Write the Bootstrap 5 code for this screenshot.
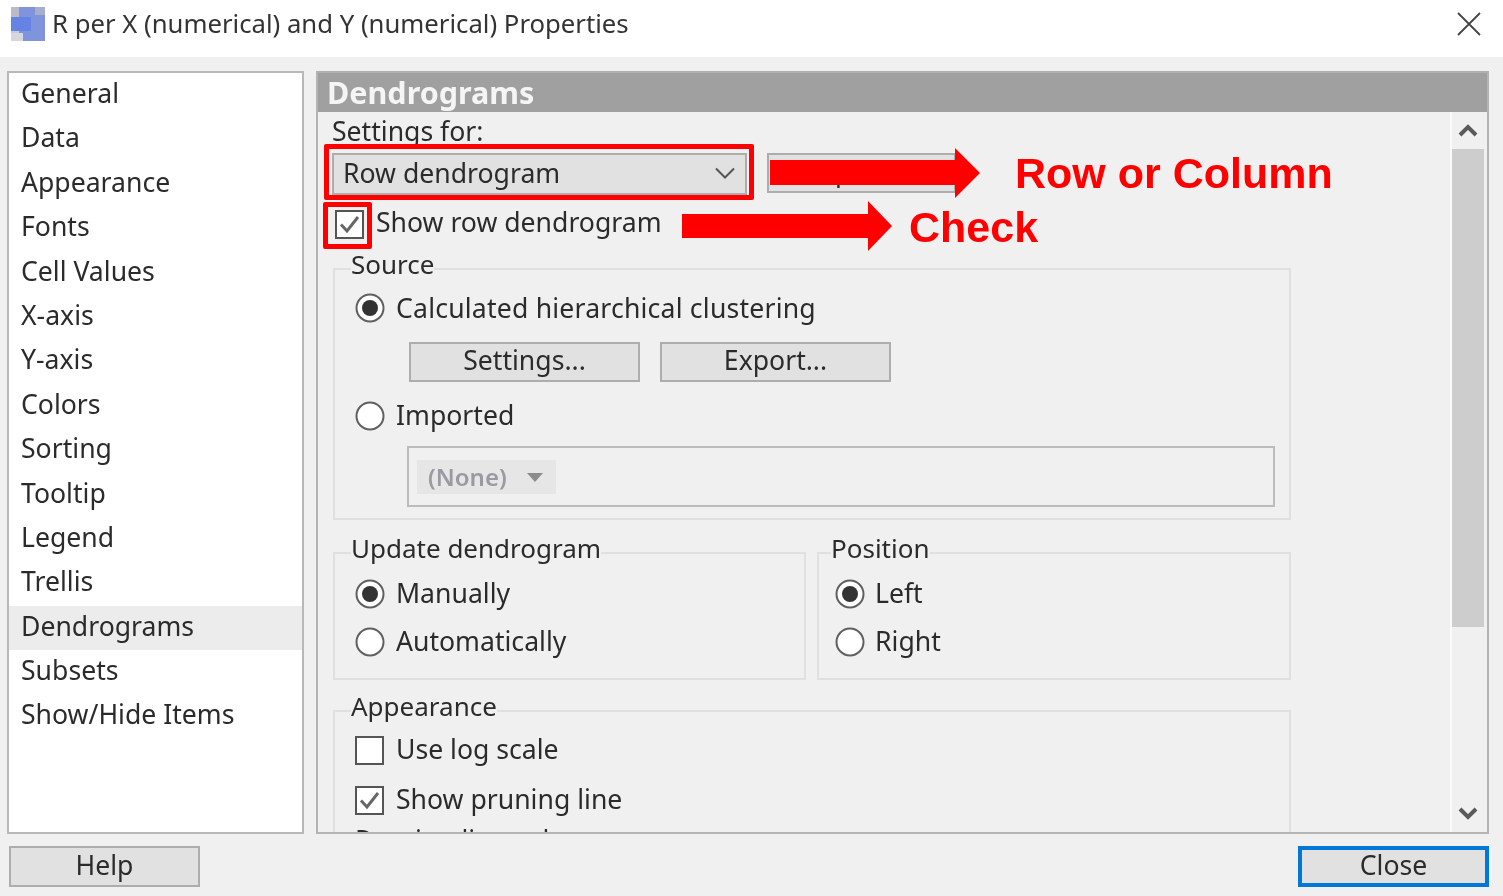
<!DOCTYPE html>
<html lang="en">
<head>
<meta charset="utf-8">
<title>R per X (numerical) and Y (numerical) Properties</title>
<link href="https://cdn.jsdelivr.net/npm/bootstrap@5.3.0/dist/css/bootstrap.min.css" rel="stylesheet">
<style>
html,body{margin:0;height:100%;overflow:hidden;background:#f0f0f0}
.dlg{position:relative;width:1503px;height:896px;background:#f0f0f0;font-family:"Noto Sans","Open Sans",sans-serif;font-size:26.6px;line-height:34px;color:#2b2b2b;overflow:hidden;filter:blur(.55px)}
.dlg-title{height:57px;background:#fff;padding:0 22px 9px 11px}
.dlg-title-text{font-size:25.7px;margin-left:7px;color:#333}
.dlg-main{height:763px;margin:14px 14px 0 7px;gap:12px}
.nav-pane{width:297px;flex:none;border:2px solid #b8b8b8;background:#fff;border-radius:0;padding:0}
.nav-pane .list-group-item{height:44.4px;padding:2px 12px;border:0;background:transparent;color:#2b2b2b;line-height:36px;font-size:26.6px}
.nav-pane .list-group-item.sel{background:#ececec}
.form-pane{flex:1;min-width:0;border:2px solid #b4b4b4;border-top-color:#b0b0b0}
.pane-head{height:39px;flex:none;background:#a0a0a0;color:#f5f5f5;font-weight:700;font-size:30.5px;line-height:38px;padding-left:9px}
.pane-body{flex:1;min-height:0}
.pane-scroll{flex:1;min-width:0;overflow:hidden;padding:6px 0 0 15px}
.lbl-row{line-height:26px;margin-left:-1px}
.ctl-row{margin-top:9px;gap:20px}
.combo{width:415px;height:42px;background:#e1e1e1;border:2px solid #adadad;padding:0 10px 2px 9px;line-height:36px;margin-left:-1px}
.win-btn{background:#e1e1e1;border:2px solid #adadad;border-radius:0;color:#2b2b2b;font-size:26.6px;line-height:32px;padding:0 0 4px;height:40px;width:231px}
.win-btn:hover{background:#e1e1e1;color:#2b2b2b;border-color:#adadad}
.btn-upd{width:189px;padding-bottom:8px}
.top-chk{margin-top:12px;gap:12px;margin-left:2px;height:34px}
.top-chk span{line-height:30px;margin-top:-4px}
.bx{width:29px;height:29px;flex:none;background:#fff;border:2px solid #555;display:block}
.rd{width:30px;height:30px;flex:none;display:block}
fieldset.grp{border:2px solid #e0e0e0;padding:0 16px 0 20px;min-width:0;margin:0;width:958px}
fieldset.grp legend{float:none;width:auto;font-size:26px;line-height:26px;padding:0 0 10px 0;margin:0 0 0 -4px;background:transparent}
.grp-source{margin-top:10px!important;height:269px}
.opt-row{height:34px;gap:11px}
.opt-row .bx{margin-right:1px}
.txt-up{padding-bottom:2px}
.txt-wide{letter-spacing:.2px}
.first-src{margin-top:4px}
.first-half{margin-top:6px}
.first-app{margin-top:4px}
.next-half{margin-top:14px}
.next-app{margin-top:16px}
.next-imp{margin-top:17px}
.clip-row{margin-top:6px}
.btn-row{margin:17px 0 0 54px;gap:20px}
.imp-box{margin:13px 0 0 52px;height:61px;width:868px;border:2px solid #bcbcbc;padding:12px 8px}
.none-pick{width:139px;height:34px;background:#e6e6e6;color:#9a9aa2;font-weight:600;font-size:24px;padding:0 11px;gap:20px;line-height:34px}
.grp-pair{margin-top:15px;gap:11px;width:958px}
.grp-half{height:145px}
.grp-update{width:473px!important}
.grp-pos{width:474px!important;padding-left:16px!important}
.grp-pos .opt-row{gap:10px}
.grp-app{margin-top:13px!important}
.sbar{width:37px;flex:none;border-left:2px solid #fafafa;background:#f0f0f0}
.sbar-btn{height:37px;padding-right:4px}
.sbar-thumb{height:478px;background:#cdcdcd;margin-right:3px}
.sbar-rest{flex:1}
.dlg-foot{margin:12px 14px 0 9px}
.foot-btn{width:191px;height:41px}
.foot-close{width:191px;border:4px solid #0078d7;line-height:28px}
.foot-close:hover{border-color:#0078d7}
.mk-box{position:absolute;border:5px solid #f00;border-radius:2px;pointer-events:none}
.mk-arrow{position:absolute;display:block}
.mk-text{position:absolute;color:#f00;font-family:"Liberation Sans",Arial,sans-serif;font-weight:700;font-size:43px;line-height:50px;white-space:nowrap}
</style>
</head>
<body>
<div class="dlg d-flex flex-column">
  <div class="dlg-title d-flex align-items-center">
    <svg width="34" height="34" viewBox="0 0 34 34"><rect width="34" height="34" fill="#c9cbd6"/><rect x="8" y="0" width="26" height="34" fill="#7f94dc"/><rect x="0" y="10" width="20" height="14" fill="#6582e4"/><rect x="0" y="0" width="8" height="10" fill="#b9bbc8"/><rect x="24" y="0" width="10" height="8" fill="#a7aecb"/><rect x="0" y="26" width="12" height="8" fill="#d6d8e0"/></svg>
    <span class="dlg-title-text flex-grow-1">R per X (numerical) and Y (numerical) Properties</span>
    <svg width="24" height="24" viewBox="0 0 24 24"><path d="M1 1 23 23M23 1 1 23" stroke="#444" stroke-width="1.8" fill="none"/></svg>
  </div>
  <div class="dlg-main d-flex">
    <div class="list-group nav-pane">
      <div class="list-group-item">General</div>
      <div class="list-group-item">Data</div>
      <div class="list-group-item">Appearance</div>
      <div class="list-group-item">Fonts</div>
      <div class="list-group-item">Cell Values</div>
      <div class="list-group-item">X-axis</div>
      <div class="list-group-item">Y-axis</div>
      <div class="list-group-item">Colors</div>
      <div class="list-group-item">Sorting</div>
      <div class="list-group-item">Tooltip</div>
      <div class="list-group-item">Legend</div>
      <div class="list-group-item">Trellis</div>
      <div class="list-group-item sel">Dendrograms</div>
      <div class="list-group-item">Subsets</div>
      <div class="list-group-item">Show/Hide Items</div>
    </div>
    <div class="form-pane d-flex flex-column">
      <div class="pane-head">Dendrograms</div>
      <div class="pane-body d-flex">
        <div class="pane-scroll">
          <div class="lbl-row">Settings for:</div>
          <div class="ctl-row d-flex">
            <div class="combo d-flex justify-content-between align-items-center">
              <span>Row dendrogram</span>
              <svg width="20" height="12" viewBox="0 0 20 12"><path d="M1 1.5 10 10.5 19 1.5" fill="none" stroke="#555" stroke-width="2"/></svg>
            </div>
            <button type="button" class="btn win-btn btn-upd">Update</button>
          </div>
          <div class="d-flex align-items-center top-chk">
            <svg class="bx" viewBox="0 0 25 25"><path d="M4 12.5 10 19 21 5" fill="none" stroke="#666" stroke-width="3"/></svg>
            <span>Show row dendrogram</span>
          </div>
          <fieldset class="grp grp-source">
            <legend>Source</legend>
            <div class="opt-row d-flex align-items-center first-src">
              <svg class="rd" viewBox="0 0 30 30"><circle cx="15" cy="15" r="13.5" fill="#fff" stroke="#5f5f5f" stroke-width="2"/><circle cx="15" cy="15" r="8" fill="#333"/></svg>
              <span class="txt-wide">Calculated hierarchical clustering</span>
            </div>
            <div class="btn-row d-flex">
              <button type="button" class="btn win-btn">Settings...</button>
              <button type="button" class="btn win-btn">Export...</button>
            </div>
            <div class="opt-row d-flex align-items-center next-imp">
              <svg class="rd" viewBox="0 0 30 30"><circle cx="15" cy="15" r="13.5" fill="#fff" stroke="#5f5f5f" stroke-width="2"/></svg>
              <span class="txt-up">Imported</span>
            </div>
            <div class="imp-box">
              <div class="none-pick d-flex align-items-center">
                <span>(None)</span>
                <svg width="16" height="9" viewBox="0 0 16 9"><path d="M0 0H16L8 9Z" fill="#8c8c8c"/></svg>
              </div>
            </div>
          </fieldset>
          <div class="grp-pair d-flex">
            <fieldset class="grp grp-half grp-update">
              <legend>Update dendrogram</legend>
              <div class="opt-row d-flex align-items-center first-half">
                <svg class="rd" viewBox="0 0 30 30"><circle cx="15" cy="15" r="13.5" fill="#fff" stroke="#5f5f5f" stroke-width="2"/><circle cx="15" cy="15" r="8" fill="#333"/></svg>
                <span class="txt-up">Manually</span>
              </div>
              <div class="opt-row d-flex align-items-center next-half">
                <svg class="rd" viewBox="0 0 30 30"><circle cx="15" cy="15" r="13.5" fill="#fff" stroke="#5f5f5f" stroke-width="2"/></svg>
                <span class="txt-up">Automatically</span>
              </div>
            </fieldset>
            <fieldset class="grp grp-half grp-pos">
              <legend>Position</legend>
              <div class="opt-row d-flex align-items-center first-half">
                <svg class="rd" viewBox="0 0 30 30"><circle cx="15" cy="15" r="13.5" fill="#fff" stroke="#5f5f5f" stroke-width="2"/><circle cx="15" cy="15" r="8" fill="#333"/></svg>
                <span class="txt-up">Left</span>
              </div>
              <div class="opt-row d-flex align-items-center next-half">
                <svg class="rd" viewBox="0 0 30 30"><circle cx="15" cy="15" r="13.5" fill="#fff" stroke="#5f5f5f" stroke-width="2"/></svg>
                <span class="txt-up">Right</span>
              </div>
            </fieldset>
          </div>
          <fieldset class="grp grp-app">
            <legend>Appearance</legend>
            <div class="opt-row d-flex align-items-center first-app">
              <span class="bx"></span>
              <span class="txt-up">Use log scale</span>
            </div>
            <div class="opt-row d-flex align-items-center next-app">
              <svg class="bx" viewBox="0 0 25 25"><path d="M4 12.5 10 19 21 5" fill="none" stroke="#666" stroke-width="3"/></svg>
              <span class="txt-up">Show pruning line</span>
            </div>
            <div class="clip-row">Pruning line color:</div>
          </fieldset>
        </div>
        <div class="sbar d-flex flex-column">
          <div class="sbar-btn d-flex align-items-center justify-content-center">
            <svg width="20" height="13" viewBox="0 0 20 13"><path d="M2 11 10 3 18 11" fill="none" stroke="#5a5a5a" stroke-width="4"/></svg>
          </div>
          <div class="sbar-thumb"></div>
          <div class="sbar-rest"></div>
          <div class="sbar-btn d-flex align-items-center justify-content-center">
            <svg width="20" height="13" viewBox="0 0 20 13"><path d="M2 2 10 10 18 2" fill="none" stroke="#5a5a5a" stroke-width="4"/></svg>
          </div>
        </div>
      </div>
    </div>
  </div>
  <div class="dlg-foot d-flex justify-content-between">
    <button type="button" class="btn win-btn foot-btn">Help</button>
    <button type="button" class="btn win-btn foot-btn foot-close">Close</button>
  </div>

  <div class="mk-box" style="left:324px;top:144px;width:430px;height:56px"></div>
  <div class="mk-box" style="left:323px;top:202px;width:49px;height:47px"></div>
  <svg class="mk-arrow" style="left:770px;top:148px" width="210" height="50" viewBox="0 0 210 50"><path d="M0 12H185V0L210 25 185 50V37H0Z" fill="#f00"/></svg>
  <svg class="mk-arrow" style="left:682px;top:201px" width="210" height="50" viewBox="0 0 210 50"><path d="M0 13H186V0L210 25 186 50V37H0Z" fill="#f00"/></svg>
  <span class="mk-text" style="left:1015px;top:148px">Row or Column</span>
  <span class="mk-text" style="left:909px;top:202px">Check</span>
</div>
<script src="https://cdn.jsdelivr.net/npm/bootstrap@5.3.0/dist/js/bootstrap.bundle.min.js"></script>
</body>
</html>
